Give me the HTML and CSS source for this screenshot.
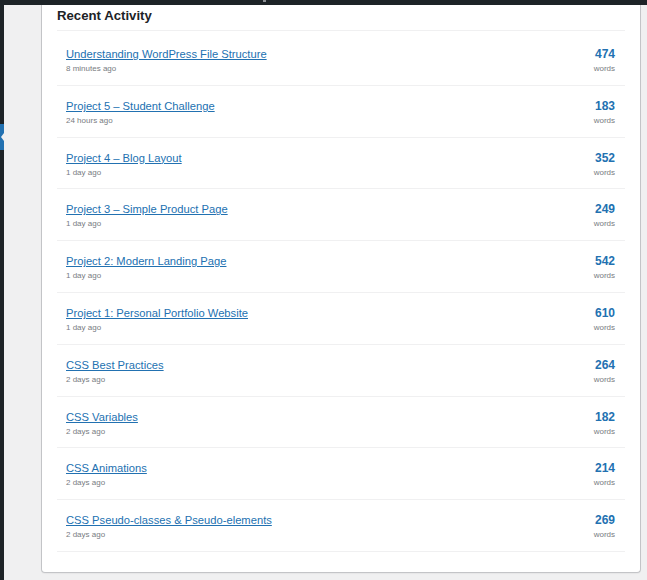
FILE: index.html
```html
<!DOCTYPE html>
<html lang="en">
<head>
<meta charset="utf-8">
<title>Recent Activity</title>
<link rel="stylesheet" href="styles.css">
</head>
<body>
<div class="adminbar"><span class="adminbar-dot"></span></div>
<div class="layout">
  <nav class="sidebar">
    <div class="menu-current"></div>
  </nav>
  <main class="content">
    <section class="card">
      <h2 class="card-title">Recent Activity</h2>
      <ul class="activity">
        <li class="item"><div class="item-main"><a href="#" class="item-link">Understanding WordPress File Structure</a><span class="item-meta">8 minutes ago</span></div><div class="item-count"><span class="count">474</span><span class="count-label">words</span></div></li>
        <li class="item"><div class="item-main"><a href="#" class="item-link">Project 5 – Student Challenge</a><span class="item-meta">24 hours ago</span></div><div class="item-count"><span class="count">183</span><span class="count-label">words</span></div></li>
        <li class="item"><div class="item-main"><a href="#" class="item-link">Project 4 – Blog Layout</a><span class="item-meta">1 day ago</span></div><div class="item-count"><span class="count">352</span><span class="count-label">words</span></div></li>
        <li class="item"><div class="item-main"><a href="#" class="item-link">Project 3 – Simple Product Page</a><span class="item-meta">1 day ago</span></div><div class="item-count"><span class="count">249</span><span class="count-label">words</span></div></li>
        <li class="item"><div class="item-main"><a href="#" class="item-link">Project 2: Modern Landing Page</a><span class="item-meta">1 day ago</span></div><div class="item-count"><span class="count">542</span><span class="count-label">words</span></div></li>
        <li class="item"><div class="item-main"><a href="#" class="item-link">Project 1: Personal Portfolio Website</a><span class="item-meta">1 day ago</span></div><div class="item-count"><span class="count">610</span><span class="count-label">words</span></div></li>
        <li class="item"><div class="item-main"><a href="#" class="item-link">CSS Best Practices</a><span class="item-meta">2 days ago</span></div><div class="item-count"><span class="count">264</span><span class="count-label">words</span></div></li>
        <li class="item"><div class="item-main"><a href="#" class="item-link">CSS Variables</a><span class="item-meta">2 days ago</span></div><div class="item-count"><span class="count">182</span><span class="count-label">words</span></div></li>
        <li class="item"><div class="item-main"><a href="#" class="item-link">CSS Animations</a><span class="item-meta">2 days ago</span></div><div class="item-count"><span class="count">214</span><span class="count-label">words</span></div></li>
        <li class="item"><div class="item-main"><a href="#" class="item-link">CSS Pseudo-classes &amp; Pseudo-elements</a><span class="item-meta">2 days ago</span></div><div class="item-count"><span class="count">269</span><span class="count-label">words</span></div></li>
      </ul>
    </section>
  </main>
</div>
</body>
</html>
```
FILE: styles.css
```css
html, body {
  margin: 0;
  padding: 0;
}
body {
  background: #f0f0f1;
  font-family: "Liberation Sans", Arial, sans-serif;
  color: #1d2327;
}
.adminbar {
  height: 5px;
  background: #1d2327;
  display: flex;
  padding-left: 263px;
}
.adminbar-dot {
  width: 3px;
  height: 2px;
  background: #8c8f94;
}
.layout {
  display: flex;
  align-items: flex-start;
}
.sidebar {
  width: 4px;
  align-self: stretch;
  background: #1d2327;
  min-height: 575px;
}
.menu-current {
  margin-top: 119px;
  height: 26px;
  background: #2271b1;
  position: relative;
}
.menu-current::after {
  content: "";
  position: absolute;
  right: 0;
  top: 9px;
  width: 0;
  height: 0;
  border-top: 4px solid transparent;
  border-bottom: 4px solid transparent;
  border-right: 3px solid #f0f0f1;
}
.content {
  flex: 1;
  padding: 0 6px 0 37px;
}
.card {
  background: #fff;
  border: 1px solid #c3c4c7;
  border-top: none;
  border-radius: 0 0 4px 4px;
  box-shadow: 0 1px 1px rgba(0, 0, 0, 0.04);
  padding: 2.2px 15px 20px;
}
.card-title {
  margin: 0;
  font-size: 13.2px;
  line-height: 18px;
  font-weight: 700;
  color: #1d2327;
  padding-bottom: 4.8px;
  border-bottom: 1px solid #f0f0f1;
}
.activity {
  list-style: none;
  margin: 3.2px 0 0;
  padding: 0;
}
.item {
  display: flex;
  justify-content: space-between;
  align-items: flex-start;
  padding: 12px 10px 8.48px 9px;
  border-bottom: 1px solid #f0f0f1;
}
.item-main,
.item-count {
  display: flex;
  flex-direction: column;
}
.item-count {
  align-items: flex-end;
}
.item-link {
  font-size: 11.2px;
  line-height: 16px;
  color: #2271b1;
  text-decoration: underline;
}
.item-meta,
.count-label {
  font-size: 8px;
  line-height: 14.3px;
  color: #787c82;
}
.count {
  font-size: 12px;
  line-height: 16px;
  font-weight: 700;
  color: #2271b1;
}
```
